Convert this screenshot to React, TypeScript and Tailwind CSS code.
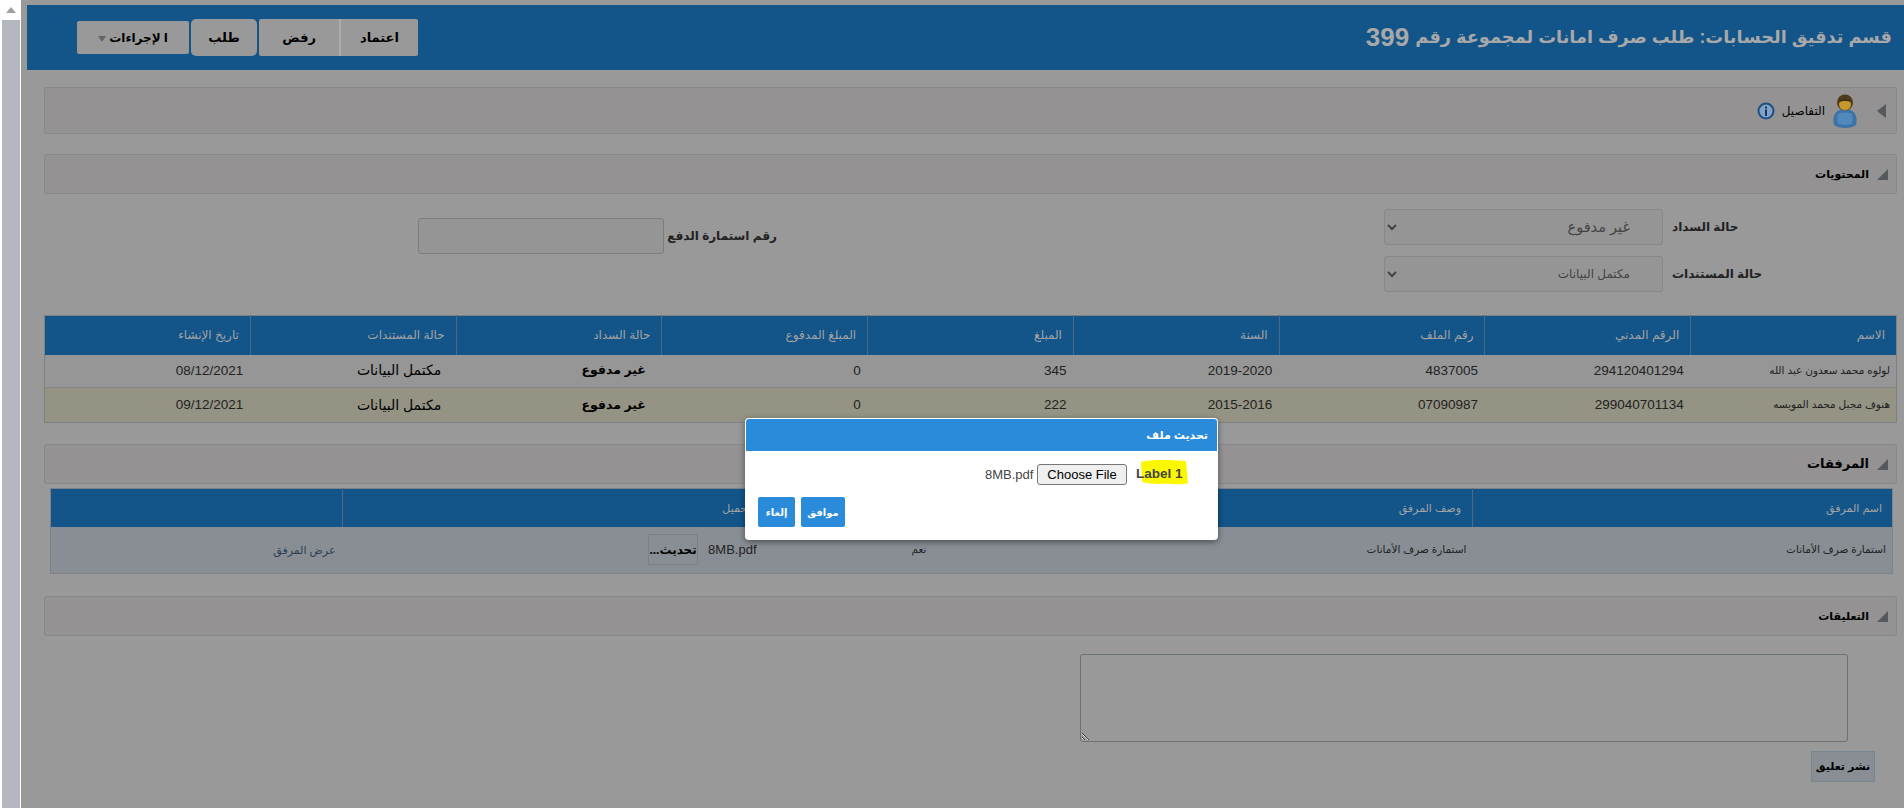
const FONT = "font-['Liberation_Sans','DejaVu_Sans',sans-serif]";

function CornerArrow() {
  return (
    <svg width="11" height="11" viewBox="0 0 11 11" className="shrink-0">
      <polygon points="11,0 11,11 0,11" fill="#55585c" />
    </svg>
  );
}

function PersonIcon() {
  return (
    <svg width="24" height="34" viewBox="0 0 24 34" className="shrink-0">
      <path d="M1 31C-1 23 2 17 8 15.500c2 1.500 6 1.500 8 0C22 17 25 23 23 31c-5 4-17 4-22 0z" fill="#3b73a8" />
      <path d="M5 20c3-2 11-2 14 0 1 3 1 7 0 10-4 1-10 1-14 0-1-3-1-7 0-10z" fill="#5288ba" />
      <circle cx="12" cy="8.500" r="8" fill="#4d3a1f" />
      <ellipse cx="12" cy="10.500" rx="6" ry="5.500" fill="#c4982a" />
      <path d="M6 8c1-4 11-4 12 0-3-1.500-9-1.500-12 0z" fill="#3b2b14" />
    </svg>
  );
}

function InfoIcon() {
  return (
    <svg width="18" height="18" viewBox="0 0 18 18" className="shrink-0">
      <circle cx="9" cy="9" r="8.500" fill="#234f80" />
      <circle cx="9" cy="9" r="6.500" fill="#7fa3c8" />
      <rect x="8" y="7.500" width="2" height="6.500" fill="#17375e" />
      <rect x="8" y="4.500" width="2" height="2" fill="#17375e" />
    </svg>
  );
}

function Panel({ title, size }: { title: string; size: string }) {
  return (
    <div className="flex h-[40px] items-center gap-[8px] rounded-[2px] border border-[#888888] bg-[#949292] pr-[8px]">
      <CornerArrow />
      <span className={`font-bold text-black ${size}`}>{title}</span>
    </div>
  );
}

const headers = ["الاسم", "الرقم المدني", "رقم الملف", "السنة", "المبلغ", "المبلغ المدفوع", "حالة السداد", "حالة المستندات", "تاريخ الإنشاء"];

const rows = [
  ["لولوه محمد سعدون عبد الله", "294120401294", "4837005", "2019-2020", "345", "0", "غير مدفوع", "مكتمل البيانات", "08/12/2021"],
  ["هنوف مجبل محمد المويسه", "299040701134", "07090987", "2015-2016", "222", "0", "غير مدفوع", "مكتمل البيانات", "09/12/2021"],
];

function cellClass(col: number) {
  if (col === 0) return "pr-[6px] text-[10.500px]";
  if (col === 6) return "pr-[16px] text-[12.500px] font-bold text-black";
  if (col === 7) return "pr-[15px] text-[14px] text-black";
  return "pr-[7px] text-[13.500px]";
}

export default function App() {
  return (
    <div dir="ltr" className={`${FONT} relative flex h-[808px] w-[1904px] overflow-hidden bg-[#999999] text-[#222]`}>
      {/* scrollbar */}
      <div className="w-[21px] shrink-0 border-l-2 border-r border-white bg-[#b4b6c0]">
        <div className="flex h-[20px] items-center justify-center bg-white">
          <div className="h-0 w-0 border-x-[5px] border-b-[6px] border-x-transparent border-b-[#a0a0a0]" />
        </div>
      </div>

      <div className="min-w-0 flex-1">
        {/* title bar */}
        <div className="ml-[6px] mt-[5px] flex h-[65px] items-center justify-between bg-[#135489] pl-[50px] pr-[12px]">
          <div dir="rtl" className="flex items-center gap-[2px]">
            <div className="flex h-[37px] w-[159px] overflow-hidden rounded-[2px] text-[13px] font-bold text-black">
              <div className="flex w-[79px] items-center justify-center border-l-2 border-[#ababab] bg-[#9a9999]">اعتماد</div>
              <div className="flex flex-1 items-center justify-center bg-[#9a9999]">رفض</div>
            </div>
            <div className="flex h-[37px] w-[66px] items-center justify-center rounded-[5px] bg-[#9a9999] text-[13px] font-bold text-black">طلب</div>
            <div className="flex h-[33px] w-[112px] items-center justify-center gap-[3px] rounded-[2px] bg-[#9a9999] text-[12px] font-bold text-black">
              <span>ا</span>
              <span>لإجراءات</span>
              <span className="mt-[3px] h-0 w-0 border-x-[4px] border-t-[6px] border-x-transparent border-t-[#666]" />
            </div>
          </div>
          <h1 dir="rtl" className="flex items-center gap-[6px] text-[17.750px] font-bold text-[#a8a8a8]">
            <span>قسم تدقيق الحسابات: طلب صرف امانات لمجموعة رقم</span>
            <span className="text-[26px]">399</span>
          </h1>
        </div>

        <div className="pl-[23px] pr-[7px]">
          {/* details panel */}
          <div dir="rtl" className="mt-[17px] flex h-[47px] items-center rounded-[2px] border border-[#888888] bg-[#949292] pr-[10px]">
            <div className="h-0 w-0 border-y-[7px] border-r-[9px] border-y-transparent border-r-[#55585c]" />
            <div className="mr-[20px]"><PersonIcon /></div>
            <span className="mr-[8px] text-[12px] text-black">التفاصيل</span>
            <div className="mr-[7px]"><InfoIcon /></div>
          </div>

          <div dir="rtl" className="mt-[20px]"><Panel title="المحتويات" size="text-[11px]" /></div>

          {/* form */}
          <div className="mt-[15px] flex items-start text-[12px] font-bold text-[#222]">
            <div className="ml-[374px] mt-[9px] flex items-center gap-[6px]">
              <input className="h-[36px] w-[246px] rounded-[3px] border border-[#7e7e7e] bg-[#959595]" />
              <label dir="rtl" className="w-[107px] whitespace-nowrap">رقم استمارة الدفع</label>
            </div>
            <div className="ml-auto grid w-[513px] grid-cols-[279px_225px] items-center gap-x-[9px] gap-y-[11px]">
              <select dir="rtl" defaultValue="a" className="h-[36px] rounded-[3px] border border-[#888888] bg-[#959595] pr-[28px] text-[14.500px] font-normal text-[#444]">
                <option value="a">غير مدفوع</option>
              </select>
              <label dir="rtl" className="text-left">حالة السداد</label>
              <select dir="rtl" defaultValue="a" className="h-[36px] rounded-[3px] border border-[#888888] bg-[#959595] pr-[28px] text-[12px] font-normal text-[#444]">
                <option value="a">مكتمل البيانات</option>
              </select>
              <label dir="rtl" className="text-left">حالة المستندات</label>
            </div>
          </div>

          {/* students table */}
          <table dir="rtl" className="mt-[23px] w-[1853px] table-fixed border-collapse border border-[#7d8185]">
            <thead>
              <tr className="h-[39px] bg-[#135489] text-[12px] text-[#a3a3a3]">
                {headers.map((h) => (
                  <th key={h} className="border-l border-[#4a6a86] pr-[11px] text-right font-normal last:border-l-0">{h}</th>
                ))}
              </tr>
            </thead>
            <tbody>
              {rows.map((row, i) => (
                <tr key={row[1]} className={i === 0 ? "h-[33px] bg-[#969696]" : "h-[35px] border-t border-[#868680] bg-[#959484]"}>
                  {row.map((cell, j) => (
                    <td key={j} className={`text-right ${cellClass(j)}`}>{cell}</td>
                  ))}
                </tr>
              ))}
            </tbody>
          </table>

          <div dir="rtl" className="mt-[21px]"><Panel title="المرفقات" size="text-[13px]" /></div>

          {/* attachments table */}
          <table dir="rtl" className="ml-[6px] mt-[4px] w-[1842px] table-fixed border-collapse border border-[#7d8288]">
            <colgroup>
              <col className="w-[420px]" />
              <col className="w-[535px]" />
              <col className="w-[176px]" />
              <col className="w-[419px]" />
              <col className="w-[292px]" />
            </colgroup>
            <thead>
              <tr className="h-[38px] bg-[#135489] text-[11px] text-[#a3a3a3]">
                <th className="border-l border-[#4a6a86] pr-[10px] text-right font-normal">اسم المرفق</th>
                <th className="border-l border-[#4a6a86] pr-[11px] text-right font-normal">وصف المرفق</th>
                <th className="pr-[11px] text-right font-normal">مطلوب</th>
                <th className="border-l border-[#4a6a86] pr-[11px] text-right font-normal">تحميل</th>
                <th />
              </tr>
            </thead>
            <tbody>
              <tr className="h-[47px] bg-[#898e95] text-[10.500px]">
                <td className="pr-[6px] text-right">استمارة صرف الأمانات</td>
                <td className="pr-[6px] text-right">استمارة صرف الأمانات</td>
                <td className="pr-[11px] text-right">نعم</td>
                <td className="pr-[5px]">
                  <div className="flex items-center gap-[10px]">
                    <span dir="ltr" className="text-[13px]">8MB.pdf</span>
                    <div className="flex h-[31px] w-[50px] items-center justify-center border border-[#7d8186] text-[12px] font-bold text-black">تحديث...</div>
                  </div>
                </td>
                <td className="pr-[7px] text-right text-[11px] text-[#2c3f52]">عرض المرفق</td>
              </tr>
            </tbody>
          </table>

          <div dir="rtl" className="mt-[22px]"><Panel title="التعليقات" size="text-[11px]" /></div>

          {/* comment box */}
          <div className="ml-[1036px] mt-[18px] w-[768px]">
            <textarea dir="rtl" className="block h-[88px] w-[768px] rounded-[3px] border border-[#69756b] bg-transparent" />
          </div>
          <div className="mr-[22px] mt-[9px] flex justify-end">
            <button dir="rtl" className="h-[31px] w-[64px] border border-[#7a868e] bg-[#898e95] text-[11px] font-bold text-black">نشر تعليق</button>
          </div>
        </div>
      </div>

      {/* upload dialog */}
      <div className="absolute left-[745px] top-[418px] h-[122px] w-[473px] rounded-[4px] bg-white shadow-[0_2px_6px_rgba(0,0,0,0.45)]">
        <div dir="rtl" className="mx-[1px] mt-[1px] flex h-[32px] items-center rounded-t-[3px] bg-[#2b8bdb] pr-[9px] text-[11px] font-bold text-white">تحديث ملف</div>
        <div className="mt-[13px] flex h-[21px] items-center pl-[240px] text-[13px] text-[#444]">
          <span className="w-[47px] text-right">8MB.pdf</span>
          <span className="ml-[5px] flex h-[21px] w-[90px] items-center justify-center rounded-[3px] border border-[#767676] bg-[#efefef] text-black">Choose File</span>
          <span className="relative ml-[9px] text-[13.500px] font-bold text-[#444]">
            {/* marker scribble drawn over the screenshot */}
            <svg width="48" height="27" viewBox="0 0 48 27" className="absolute -top-[5px] left-[4px]">
              <path d="M1 3C10 0 35 1 46 2L48 24C40 27 30 24 20 25 12 25 6 24 2 23Z" fill="#fbf704" />
            </svg>
            <span className="relative">Label 1</span>
          </span>
        </div>
        <div className="ml-[13px] mt-[12px] flex gap-[6px]">
          <button className="h-[30px] w-[37px] rounded-[2px] bg-[#2b8bdb] text-[10px] font-bold text-white">إلغاء</button>
          <button className="h-[30px] w-[44px] rounded-[2px] bg-[#2b8bdb] text-[10px] font-bold text-white">موافق</button>
        </div>
      </div>
    </div>
  );
}
